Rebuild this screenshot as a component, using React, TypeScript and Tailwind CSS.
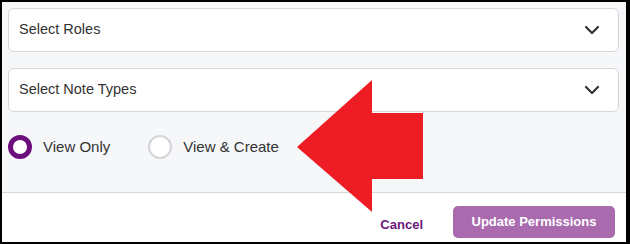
import { ChevronDown } from 'lucide-react'

const font = { fontFamily: '"Liberation Sans", Arial, sans-serif' }

function SelectBox({ label }: { label: string }) {
  return (
    <div className="flex h-[44px] items-center justify-between rounded-[6px] border border-[#d4d6da] bg-white pl-[10px] pr-[14px]">
      <span className="text-[14.5px] text-[#333]">{label}</span>
      <ChevronDown className="h-[24px] w-[24px] text-[#333]" strokeWidth={2.2} />
    </div>
  )
}

function Radio({ label, checked }: { label: string; checked?: boolean }) {
  return (
    <label className="flex items-center gap-[11px]">
      <span
        className={
          checked
            ? 'h-[24px] w-[24px] rounded-full border-[5px] border-[#6c0e7c] bg-white'
            : 'h-[24px] w-[24px] rounded-full border-2 border-[#d2d4d8] bg-white'
        }
      />
      <span className="text-[15px] text-[#333]">{label}</span>
    </label>
  )
}

export default function App() {
  return (
    <div
      style={font}
      className="relative flex h-[244px] w-[630px] flex-col overflow-hidden border-b-2 border-l-2 border-r-[4px] border-t-2 border-black bg-white"
    >
      <div className="flex flex-col border-b border-[#d8d8d8] bg-[#f6f7f9] pb-[33px] pl-[6px] pr-[7px] pt-[6px]">
        <div className="flex flex-col gap-[16px]">
          <SelectBox label="Select Roles" />
          <SelectBox label="Select Note Types" />
        </div>
        <div className="mt-[23px] flex items-center gap-[38px]">
          <Radio label="View Only" checked />
          <Radio label="View & Create" />
        </div>
      </div>
      <div className="flex flex-1 items-start justify-end gap-[30px] pr-[11px] pt-[13px]">
        <button className="mt-[9px] text-[13px] font-bold text-[#6b1a7b]">Cancel</button>
        <button className="h-[32px] w-[162px] rounded-[5px] bg-[#a96aae] text-[13px] font-bold text-white">
          Update Permissions
        </button>
      </div>
      <svg
        className="pointer-events-none absolute left-[-2px] top-[-2px]"
        width="630"
        height="244"
        viewBox="0 0 630 244"
      >
        <polygon
          points="297,147 372,80 372,113 423,113 423,179 372,179 372,212"
          fill="#ee1c25"
        />
      </svg>
    </div>
  )
}
